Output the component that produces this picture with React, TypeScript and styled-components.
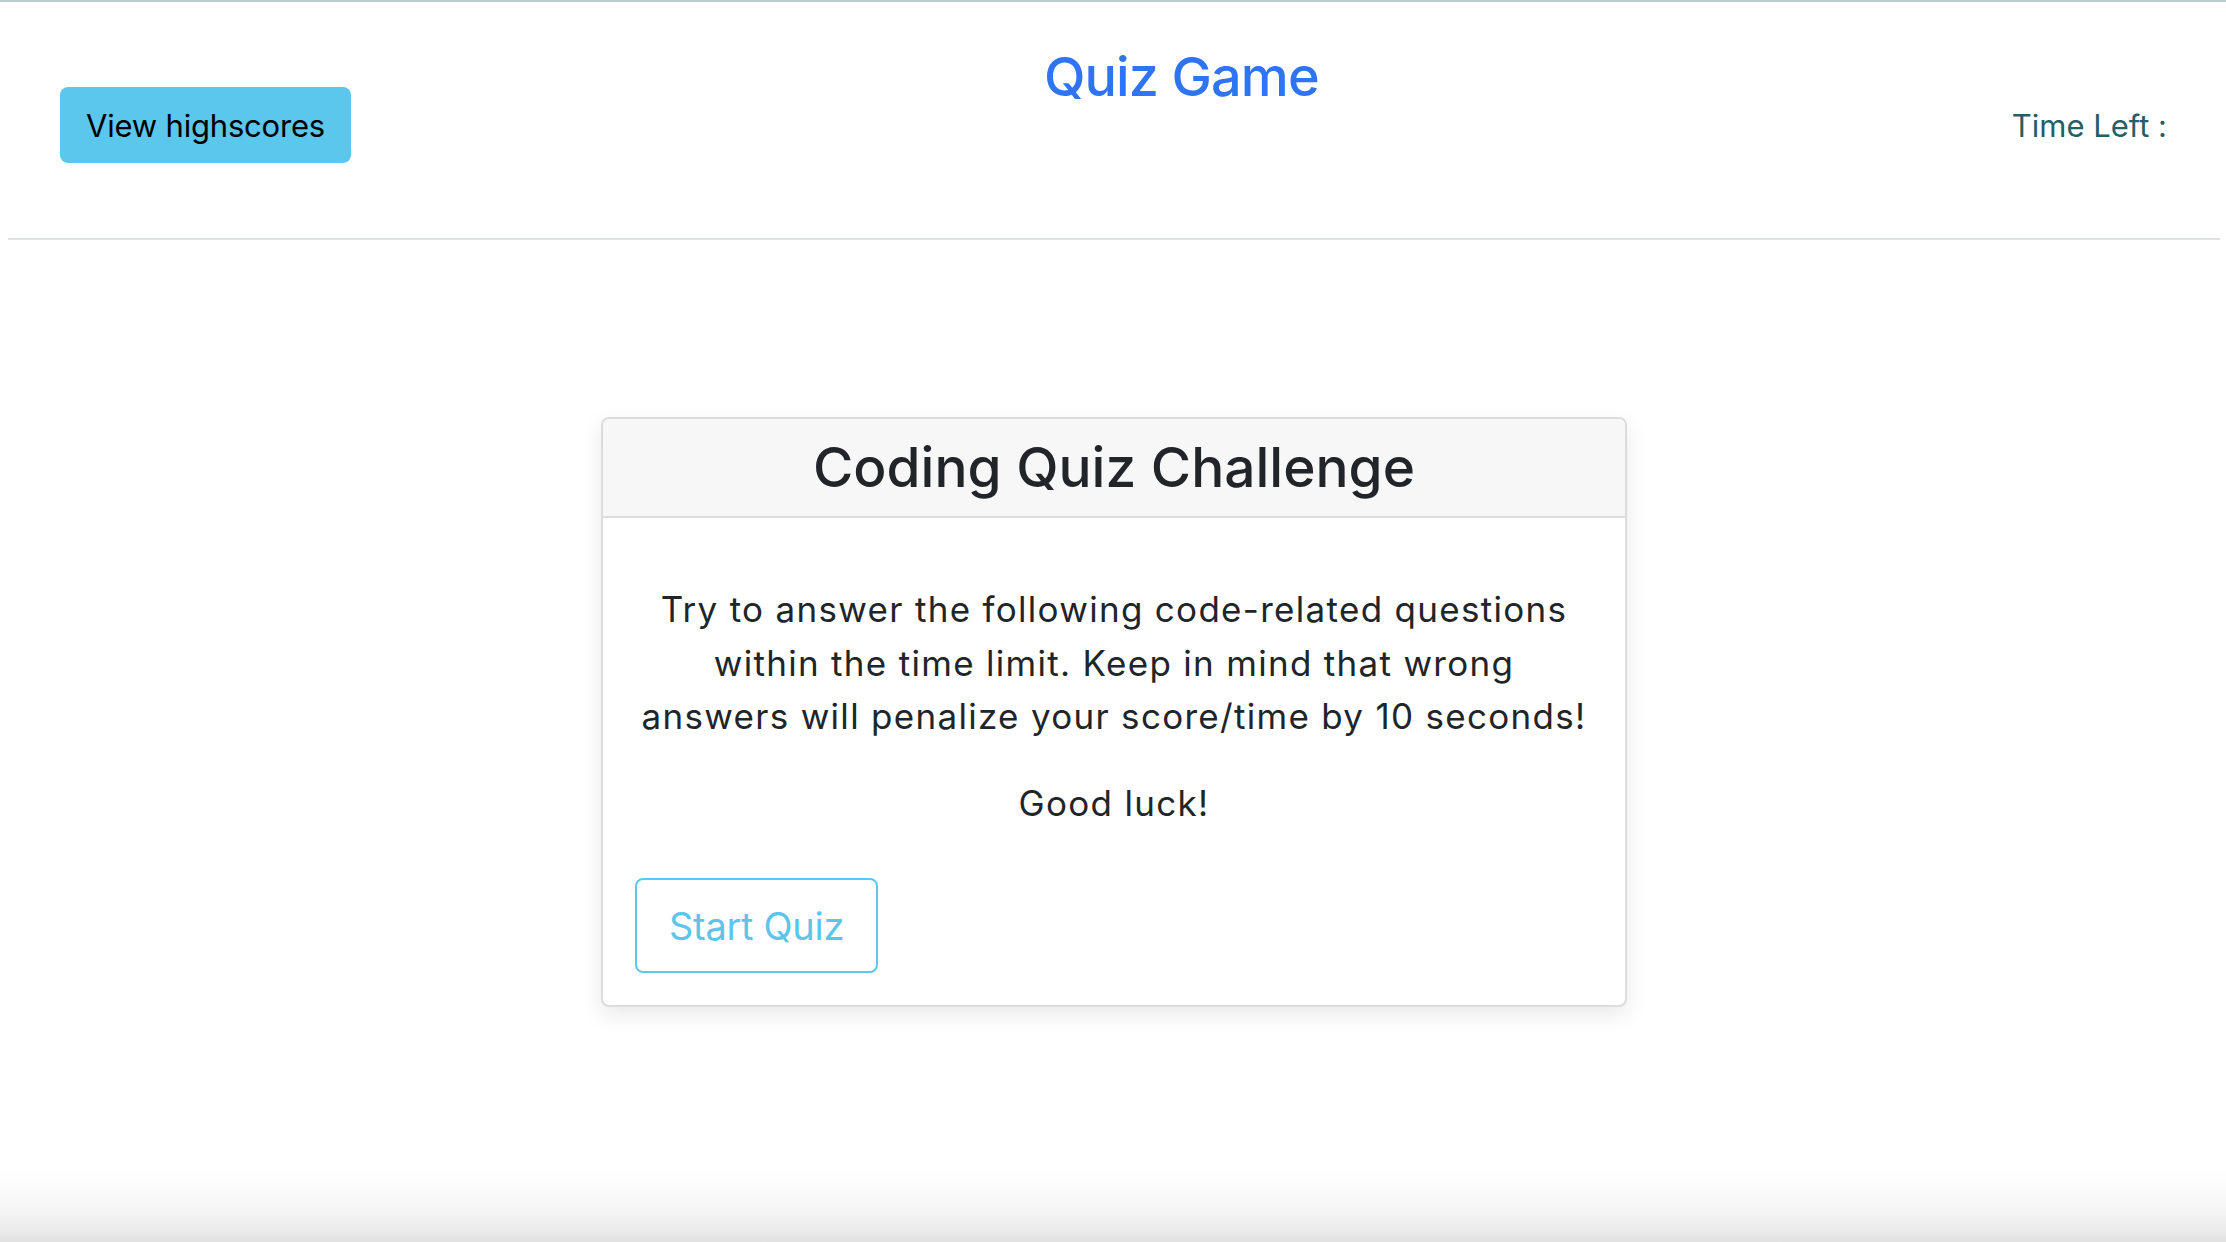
import React from "react";
import styled, { createGlobalStyle } from "styled-components";

const GlobalStyle = createGlobalStyle`
  *, *::before, *::after { box-sizing: border-box; }
  html, body { margin: 0; padding: 0; }
  body {
    font-family: Inter, "Noto Sans", "Liberation Sans", sans-serif;
    color: #212529;
    background: #ffffff;
  }
`;

const Page = styled.div`
  min-height: 100vh;
  display: flex;
  flex-direction: column;
  border-top: 2px solid #b9cdcd;
  background: linear-gradient(
    to bottom,
    #ffffff 0,
    #ffffff calc(100% - 76px),
    #fbfbfb calc(100% - 52px),
    #f4f4f4 calc(100% - 30px),
    #ebebeb calc(100% - 12px),
    #e1e1e1 100%
  );
`;

const Header = styled.header`
  display: flex;
  justify-content: space-between;
  align-items: flex-start;
  height: 236px;
  padding: 0 59px 0 60px;
`;

const HighscoresButton = styled.button`
  margin-top: 85px;
  height: 76px;
  padding: 0 26px;
  border: none;
  border-radius: 8px;
  background: #5bc7ec;
  color: #000;
  font-family: inherit;
  font-size: 31px;
  font-weight: 400;
  letter-spacing: -0.2px;
  cursor: pointer;
`;

const Title = styled.h1`
  margin: 42px 0 0;
  font-size: 54px;
  line-height: 66px;
  font-weight: 500;
  letter-spacing: -0.9px;
  color: #2f74f5;
`;

const Timer = styled.div`
  margin-top: 100px;
  font-size: 31px;
  line-height: 48px;
  color: #245e66;
`;

const Rule = styled.hr`
  margin: 0 6px 0 8px;
  border: none;
  border-top: 2px solid #dee2e6;
  height: 0;
`;

const Main = styled.main`
  display: flex;
  justify-content: center;
  padding-top: 177px;
  padding-left: 2px;
`;

const Card = styled.section`
  width: 1026px;
  border: 2px solid #dcdcdc;
  border-radius: 8px;
  background: #fff;
  box-shadow: 0 8px 22px rgba(0, 0, 0, 0.09);
  overflow: hidden;
`;

const CardHeader = styled.div`
  padding: 15px 32px 16px;
  background: #f7f7f7;
  border-bottom: 2px solid #dcdcdc;
  text-align: center;
`;

const CardTitle = styled.h2`
  margin: 0;
  font-size: 55px;
  line-height: 66px;
  font-weight: 500;
  letter-spacing: 0;
  color: #212529;
`;

const CardBody = styled.div`
  display: flex;
  flex-direction: column;
  align-items: stretch;
  padding: 32px;
`;

const Text = styled.p<{ $gapAfter: number }>`
  margin: 0 0 ${(p) => p.$gapAfter}px;
  padding: 0 4px;
  font-size: 35px;
  line-height: 53.5px;
  letter-spacing: 1.3px;
  text-align: center;
  color: #212529;
  &:first-child {
    margin-top: 33px;
  }
`;

const StartButton = styled.button`
  align-self: flex-start;
  height: 95px;
  padding: 0 32px;
  border: 2px solid #5bc8ef;
  border-radius: 8px;
  background: #fff;
  color: #5bc5ec;
  font-family: inherit;
  font-size: 38px;
  font-weight: 400;
  letter-spacing: -0.3px;
  cursor: pointer;
`;

export default function App() {
  return (
    <>
      <GlobalStyle />
      <Page>
        <Header>
          <HighscoresButton>View highscores</HighscoresButton>
          <Title>Quiz Game</Title>
          <Timer>Time Left :</Timer>
        </Header>
        <Rule />
        <Main>
          <Card>
            <CardHeader>
              <CardTitle>Coding Quiz Challenge</CardTitle>
            </CardHeader>
            <CardBody>
              <Text $gapAfter={33}>
                Try to answer the following code-related questions within the
                time limit. Keep in mind that wrong answers will penalize your
                score/time by 10 seconds!
              </Text>
              <Text $gapAfter={48}>Good luck!</Text>
              <StartButton>Start Quiz</StartButton>
            </CardBody>
          </Card>
        </Main>
      </Page>
    </>
  );
}
